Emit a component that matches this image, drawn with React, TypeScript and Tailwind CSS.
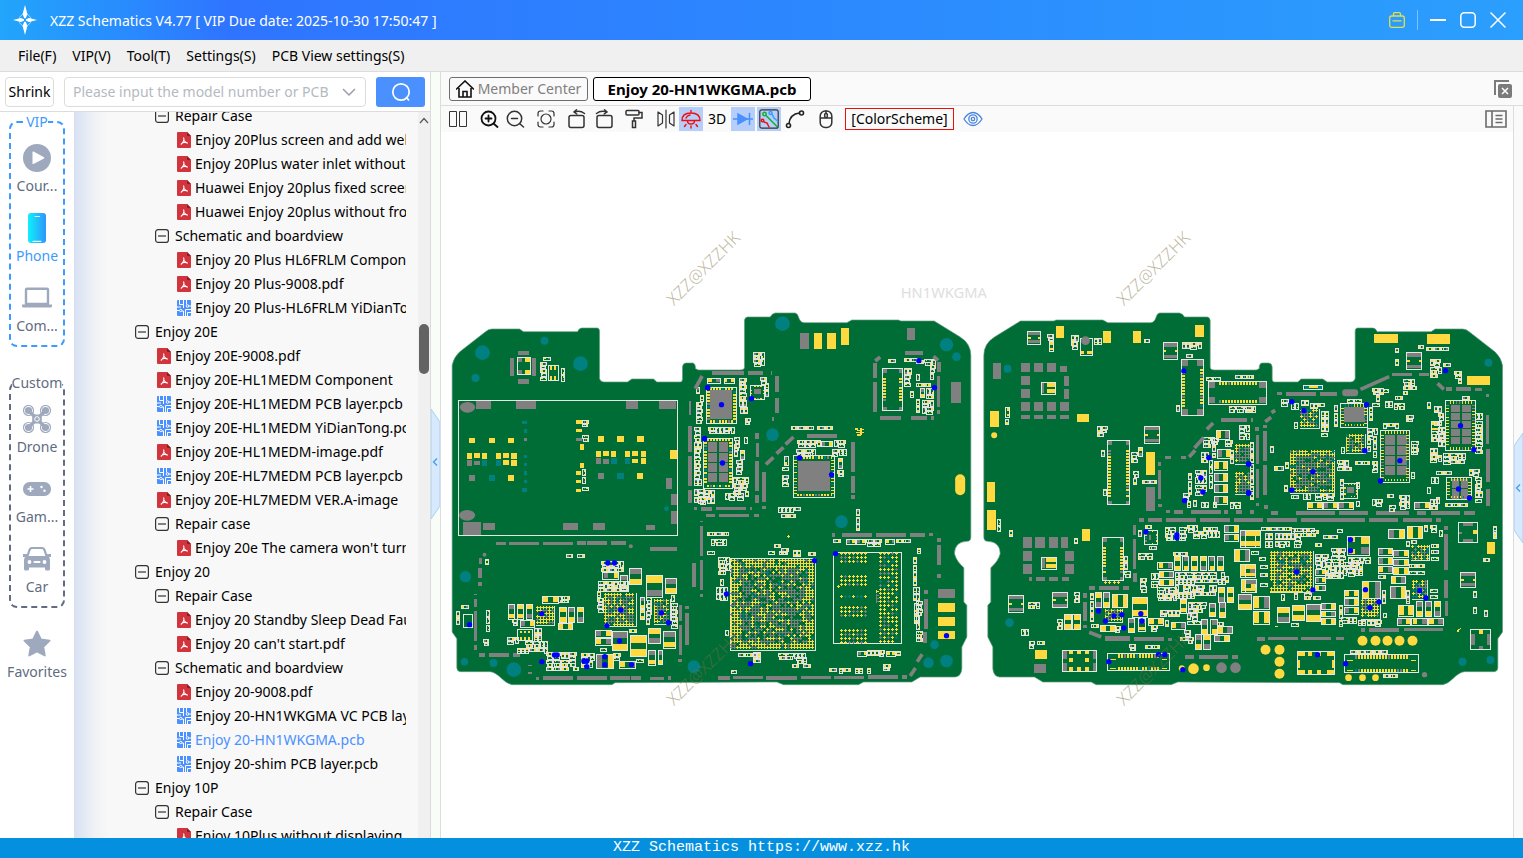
import React from 'react';

type Box = number[];

const HASH_SEED = 7919;

// Small seeded generator so that the board always comes out the same
const makeRandom = (seed: number) => {
  let s = seed * 2654435761 + HASH_SEED;
  return () => {
    s = (Math.imul(s ^ (s >>> 15), 2246822519) + 3266489917) | 0;
    return ((s ^ (s >>> 13)) >>> 0) / 4294967296;
  };
};

const parse = (data: string): Box[] =>
  data.split(';').map((part) => part.trim()).filter(Boolean).map((part) => part.split(/\s+/).map(Number));

const rect = (x: number, y: number, w: number, h: number) => `M${x} ${y}h${w}v${h}h${-w}z`;

interface Layers {
  yellow: string;
  gray: string;
  teal: string;
  hole: string;
  thin: string;
  thick: string;
}

// A two-terminal part: outline with a pad on each end
const addCap = (out: Layers, rnd: () => number, x: number, y: number, w: number, h: number, big = false) => {
  out[big ? 'thick' : 'thin'] += rect(x, y, w, h);
  const wide = w >= h;
  const pad = Math.round((wide ? w : h) * (big ? 0.34 : 0.36));
  const i = 2;
  const first = rnd() > 0.36 ? 'yellow' : 'gray';
  const second = first === 'gray' || rnd() > 0.45 ? 'yellow' : 'gray';
  if (wide) {
    out[first] += rect(x + i, y + i, pad - 2, h - i * 2);
    out[second] += rect(x + w - pad, y + i, pad - 2, h - i * 2);
  } else {
    out[first] += rect(x + i, y + i, w - i * 2, pad - 2);
    out[second] += rect(x + i, y + h - pad, w - i * 2, pad - 2);
  }
};

// Fills a region with small parts
const addCluster = (out: Layers, rnd: () => number, [x, y, w, h]: Box) => {
  if (w < 16 && h < 16) {
    addCap(out, rnd, x, y, w, h);
    return;
  }
  let py = y;
  while (py < y + h - 6) {
    const bh = Math.min(20, y + h - py);
    let px = x;
    while (px < x + w - 6) {
      const left = x + w - px;
      const roll = rnd();
      if (roll < 0.07) {
        px += 12;
      } else if (bh >= 15 && (roll < 0.5 || left < 16)) {
        addCap(out, rnd, px, py, 9, bh - 2);
        px += 12;
      } else if (left >= 15) {
        const cw = Math.min(20, left);
        addCap(out, rnd, px, py, cw, 9);
        if (bh > 17) addCap(out, rnd, px + (roll > 0.8 ? 3 : 0), py + 11, cw - 3, 8);
        px += cw + 3;
      } else {
        px += 10;
      }
    }
    py += bh < 18 ? bh + 2 : 22;
  }
};

// Ball grid array: x y w h pitch grayShare tealShare
const addGrid = (out: Record<'yellow' | 'gray' | 'teal', string>, rnd: () => number, b: Box) => {
  const [x, y, w, h, pitch, grayShare, tealShare] = b;
  for (let r = y + 4; r < y + h - 2; r += pitch) {
    for (let c = x + 4; c < x + w - 2; c += pitch) {
      const dx = Math.abs((c - x) / w - 0.5);
      const dy = Math.abs((r - y) / h - 0.5);
      const central = Math.max(dx, dy) < 0.4;
      const inner = central ? 1.5 : 0.4;
      const roll = rnd();
      if (central && w > 120 && rnd() > 0.86) continue;
      if (roll > 0.97) continue;
      const key = roll < tealShare ? 'teal' : roll < tealShare + grayShare * inner ? 'gray' : 'yellow';
      out[key] += `M${c - 4} ${r}h9M${c} ${r - 4}v9`;
    }
  }
};

// Quad package: x y w h, then centre x y w h, then centre columns and rows
const addQuad = (out: Layers, rnd: () => number, b: Box) => {
  const [x, y, w, h, cx, cy, cw, ch, cols, rows] = b;
  out.thick += rect(x, y, w, h);
  const len = w > 60 ? 11 : 6;
  const pick = () => (rnd() > 0.2 ? 'yellow' : rnd() > 0.5 ? 'gray' : 'teal');
  for (let px = x + 12; px < x + w - 12; px += 9) {
    out[pick()] += rect(px, y + 2, 5, len - 3);
    out[pick()] += rect(px, y + h - len + 1, 5, len - 3);
  }
  for (let py = y + 12; py < y + h - 12; py += 9) {
    out[pick()] += rect(x + 2, py, len - 2, 5);
    out[pick()] += rect(x + w - len, py, len - 2, 5);
  }
  const sw = (cw + 6) / cols;
  const sh = (ch + 3) / rows;
  for (let i = 0; i < cols; i++) {
    for (let j = 0; j < rows; j++) {
      out.gray += rect(Math.round(cx + i * sw), Math.round(cy + j * sh), Math.round(sw - 6), Math.round(sh - 3));
    }
  }
};

// Connector with pads along the two long sides
const addConnector = (out: Layers, rnd: () => number, [x, y, w, h]: Box) => {
  out.thick += rect(x, y, w, h);
  const pick = () => (rnd() > 0.18 ? 'yellow' : rnd() > 0.3 ? 'gray' : 'teal');
  if (w > h) {
    for (let px = x + 32; px < x + w - 30; px += 9) {
      out[pick()] += rect(px, y + 2, 4, 10);
      out[pick()] += rect(px, y + h - 12, 4, 10);
    }
    if (h > 60) {
      out.gray += rect(x + 2, y + 2, 18, 18) + rect(x + 2, y + h - 20, 18, 18) + rect(x + w - 22, y + 2, 20, 18) + rect(x + w - 22, y + h - 20, 20, 18);
    } else {
      out.yellow += rect(x + 8, y + 15, 16, 3) + rect(x + 8, y + h - 8, 16, 3) + rect(x + w - 24, y + 15, 16, 3) + rect(x + w - 24, y + h - 8, 16, 3);
    }
  } else {
    const corner = h > 150 && h < 180 ? 18 : 10;
    for (let py = y + 28; py < y + h - 28; py += 9) {
      out[pick()] += rect(x + 2, py, 9, 5);
      out[pick()] += rect(x + w - 12, py, 10, 5);
    }
    out.gray += rect(x + 2, y + 2, corner, corner) + rect(x + w - corner - 2, y + 2, corner, corner) + rect(x + 2, y + h - corner - 2, corner, corner) + rect(x + w - corner - 2, y + h - corner - 2, corner, corner);
  }
};

interface SectorData {
  offset: number;
  seed: number;
  gray: string;
  yellow: string;
  teal: string;
  grayDots: string;
  yellowDots: string;
  tealDots: string;
  blueDots: string;
  bars: string;
  boxes: string;
  caps: string;
  clusters: string;
  grids: string;
  quads: string;
  connectors: string;
  inductors: string;
}

const sectors: SectorData[] = [
  {
    offset: 0,
    seed: 3,
    gray: '234 153 33 12;210 174 12 54;276 174 12 54;234 237 33 14;232 174 14 10;232 210 14 12;108 303 45 24;228 303 60 24;558 303 36 24;657 303 51 24;69 666 54 39;129 669 36 21;369 669 45 21;459 669 36 21;618 675 27 15;693 633 18 39;693 582 18 33;678 534 18 33;747 303 6 42;744 378 12 78;744 468 12 90;744 570 12 39;778 663 10 3;778 678 11 90;778 780 11 90;756 789 12 72;778 882 11 9;762 621 9 9;783 621 30 12;168 726 30 9;207 726 90 9;309 726 90 9;411 723 27 12;441 723 60 12;513 723 45 12;630 741 81 12;117 774 9 18;114 804 12 30;114 846 12 12;102 882 9 3;102 897 9 24;102 933 9 90;102 1035 9 15;117 1059 18 12;147 1059 60 12;219 1059 21 12;264 1095 12 3;264 1116 12 6;288 1131 9 9;309 1128 90 12;411 1128 90 12;510 1128 60 12;573 1128 30 12;630 1131 42 9;684 1128 9 12;717 915 9 48;717 975 9 90;714 1077 12 9;735 918 12 9;735 939 12 96;252 414 9 9;408 414 18 9;81 480 15 18;102 483 18 12;87 525 18 18;468 474 15 18;489 477 18 15;474 519 18 18',
    yellow: '255 174 15 10;255 210 15 12;87 414 18 15;147 414 18 15;204 414 18 15;81 459 15 18;102 459 18 15;126 459 15 18;168 459 15 18;189 459 18 15;213 459 18 18;189 480 18 15;213 480 18 18;204 525 18 18;408 360 18 12;408 387 18 9;420 432 12 18;420 489 12 15;408 513 15 12;408 540 15 9;408 567 15 9;474 408 18 18;531 408 21 18;591 408 21 18;468 453 15 18;489 453 18 15;513 453 15 18;555 453 15 18;576 453 18 15;603 453 15 18;576 477 18 12;603 474 15 18;591 519 18 18;690 450 21 27;239 991 5 8;251 991 5 8;263 991 5 8;239 1010 5 8;251 1010 5 8;263 1010 5 8;330 198 6 12;342 198 6 12;330 226 6 12;342 226 6 12',
    teal: '246 363 15 9;252 387 9 12;252 465 9 9;252 489 9 9;252 513 9 12;252 540 9 9;246 564 15 12;126 480 15 18;168 480 15 18;147 525 18 18;513 474 18 18;555 474 15 18;531 519 21 18',
    grayDots: '133 763 6;572 738 6',
    yellowDots: '',
    tealDots: '127 157 22;313 121 12;421 190 22;106 233 12;76 829 17;73 1084 11;160 1088 12;221 1108 22;679 625 7;761 1099 19',
    blueDots: '802 262;794 415;503 788;523 788;305 940;88 973;542 929;500 976;664 938;685 967;538 1022;343 1064;351 1064;305 1084;431 1082;440 1082;440 1099;494 1069;494 1093;574 1093',
    bars: '765 265 786 227',
    boxes: '55 301 658 405;232 171 40 52;324 195 32 46;232 987 46 34;70 942 26 38',
    caps: '204 912 20 44;231 912 20 44;258 912 20 44;358 921 20 45;384 921 20 45;411 921 20 45;306 888 48 20;240 960 42 20;354 968 44 20;568 805 37 48;618 825 50 65;676 834 34 46;488 816 48 20;541 825 20 44;465 990 48 20;465 1014 48 20;516 993 46 58;570 1005 50 64;625 984 36 46;670 993 36 50;625 1050 22 44;537 1084 48 19;468 1063 52 42;600 891 14 34;600 927 14 30;654 1051 14 42',
    clusters: '300 186 20 56;365 204 9 40;310 170 36 10;428 360 16 70;428 508 12 42;428 560 16 16;768 262 22 108;762 382 20 178;762 568 40 40;378 762 80 10;484 783 75 30;476 843 90 30;472 872 18 90;618 890 16 85;695 886 16 95;48 933 18 50;64 915 32 10;136 777 8 18;140 930 9 70;130 1017 16 20;216 957 16 20;202 1012 30 22;282 984 20 40;232 1022 95 38;318 1057 98 54;480 1043 32 14;424 1060 40 44;568 987 28 14;590 1076 32 14;356 888 34 28;520 1060 24 28',
    grids: '288 918 56 56 9 0.25 0;492 878 96 100 9 0.35 0.06;640 896 50 76 9 0.35 0.06',
    quads: '',
    connectors: '',
    inductors: '',
  },
  {
    offset: 780,
    seed: 11,
    gray: '300 99 27 48;621 84 24 36;615 153 54 12;519 189 12 45;519 246 12 90;540 348 63 12;633 348 48 12;693 348 9 12;711 186 12 30;711 228 9 62;711 291 9 30;711 330 9 12;753 246 30 63;36 213 96 12;144 213 45 12;213 213 3 12;225 228 12 48;225 294 12 45;216 351 6 12;165 399 12 18;168 429 9 42;165 483 12 90;165 585 12 24;186 516 12 90;186 618 12 9;321 402 90 12;453 426 12 90;453 528 12 51;453 585 12 12;3 621 33 12;48 621 90 9;150 621 6 9;18 642 27 9;57 642 90 9;162 642 15 9;396 699 9 12;426 699 90 12;528 699 90 12;630 699 45 12;687 699 12 9;711 714 12 12;711 735 12 60;711 822 12 12;714 867 51 27;672 870 12 12;672 897 12 90;669 996 12 33;54 1128 36 12;99 1128 90 9;198 1128 93 10;303 1128 90 9;402 1126 90 11;504 1125 90 12;606 1125 15 12',
    yellow: '342 99 24 48;381 99 27 48;423 84 24 51;714 909 51 27;714 951 51 27;714 993 51 24;262 708 8 2;265 705 2 8;464 384 8 4;470 388 14 4;466 394 24 4;470 400 8 8;480 382 4 22;484 386 7 4;474 404 8 4',
    teal: '',
    grayDots: '',
    yellowDots: '',
    tealDots: '247 70 22;739 133 20;769 169 13;217 403 19;424 664 19;703 1033 13;739 1082 19;685 1087 16',
    blueDots: '656 181;703 262;23 262;64 313;154 295;13 415;67 488;298 472;394 523;343 781;406 760;79 881;151 1090;739 1006',
    bars: '197 492 220 471;229 460 250 441;256 432 280 410;525 182 540 170;700 168 714 180;651 1084 666 1062;630 1127 646 1103',
    boxes: '90 775 256 276;400 757 204 273',
    caps: '120 450 14 28;660 264 14 28;252 468 12 28;414 474 14 30;364 424 34 15;22 234 40 14;72 234 30 14;438 718 28 13;468 718 28 13;556 718 28 13;642 908 12 30;642 940 12 30;472 1053 28 14;558 1053 28 14',
    clusters: '160 156 36 46;118 234 24 86;168 232 38 18;196 248 12 42;120 322 30 24;136 354 16 20;25 381 88 24;103 410 16 60;134 410 12 24;108 480 20 40;100 530 48 60;75 580 75 22;0 570 42 42;273 378 66 13;341 370 9 21;353 378 52 13;292 421 40 24;330 421 30 20;404 421 38 20;290 448 60 18;384 448 54 18;248 500 18 10;246 526 22 36;412 510 18 20;234 621 68 16;243 642 45 16;468 628 14 64;22 696 62 12;34 716 52 26;22 752 20 10;55 770 35 52;60 838 22 64;48 860 12 40;204 752 60 10;222 733 20 10;245 744 22 28;280 750 22 20;326 756 22 10;565 178 30 14;612 174 40 10;612 204 20 60;650 180 20 10;674 176 34 24;650 222 22 24;690 196 16 60;650 250 40 10;630 272 14 30;680 264 20 34;648 296 9 44;668 300 32 42;400 718 28 13;500 718 50 18;588 718 50 14;652 744 16 16;640 772 14 130;650 860 16 168;114 1060 78 10;160 1056 30 34;236 1058 84 18;276 1070 60 36;502 1050 52 18;588 1052 12 14;388 1104 20 16;418 1104 96 16;550 1092 20 20;94 1109 16 8;75 990 8 18',
    grids: '90 775 256 276 9 0.38 0.05;420 754 80 42 12 0.3 0;420 823 80 42 12 0.3 0;420 884 80 16 12 0.1 0.7;420 916 80 42 12 0.3 0;420 985 80 46 12 0.3 0;537 754 56 276 12 0.25 0.1;410 854 12 12 12 0 0;526 870 12 42 10 0.4 0',
    quads: '19 260 90 110 30 270 66 87 1 1;10 413 88 150 24 426 60 120 2 4;280 466 124 124 294 483 96 90 1 1;150 256 44 42 162 267 20 15 1 1',
    connectors: '547 205 60 126',
    inductors: '',
  },
  {
    offset: 1605,
    seed: 23,
    gray: '54 189 24 48;138 189 27 27;177 189 27 27;216 189 27 27;255 198 21 18;138 228 27 27;267 228 15 30;138 267 27 27;267 267 15 30;138 306 27 27;177 306 27 27;216 306 27 27;255 306 27 27;138 345 27 12;177 345 27 12;216 345 27 12;255 345 27 12;513 561 27 72;549 486 9 12;549 510 9 87;549 612 12 9;570 468 18 9;618 468 15 9;738 354 78 12;828 354 6 12;573 630 12 9;597 630 27 12;648 630 90 10;747 630 12 12;783 630 18 12;825 630 12 12;492 654 15 12;519 654 42 12;573 654 90 12;675 654 90 12;777 654 63 12;144 711 27 33;180 711 30 33;222 711 27 33;258 711 21 33;144 753 27 30;270 753 27 30;144 792 27 30;270 792 27 30;162 831 9 12;183 831 27 12;222 831 27 12;261 831 21 12;474 675 9 30;474 717 9 90;474 819 12 27;342 858 18 12;372 858 60 12;444 858 18 12;324 879 12 15;324 906 12 57;324 975 12 9;390 1008 75 15;477 1011 90 12;579 1014 12 9;177 1092 36 27;630 1065 27 12;672 1065 87 12;771 1065 18 12;199 248 6 31;199 773 9 31;263 1053 12 24;263 1088 12 24;353 1053 12 24;353 1088 12 24',
    yellow: '243 78 24 36;384 93 24 36;474 93 24 36;660 75 27 36;45 333 27 48;306 342 36 24;513 456 27 69;36 546 24 60;36 630 27 60;321 687 24 36;180 1050 36 27;216 248 25 13;216 266 25 13;213 773 32 12;213 790 32 12;318 152 9 9;336 152 14 9;282 1050 12 12;306 1050 12 12;330 1050 12 12;282 1074 12 12;330 1074 12 12;282 1101 12 12;306 1101 12 12;330 1101 12 12;386 846 10 2;390 842 2 10;398 846 10 2;402 842 2 10;412 846 10 2;416 842 2 10;425 846 10 2;429 842 2 10',
    teal: '',
    grayDots: '331 121 13;739 1102 16;781 1102 16',
    yellowDots: '655 1105 16;694 1102 10;620 1104 9;57 405 9',
    tealDots: '97 205 12;103 967 13',
    blueDots: '626 212;701 472;820 491;677 533;683 575;820 578;628 601;512 695;605 704;605 712;370 932;416 947;440 943;391 962;446 983;497 940;500 962;550 1063;569 1063;401 1084;623 1108',
    bars: '642 470 660 450;658 443 686 411;695 387 714 368;342 996 378 1010',
    boxes: '198 246 44 35;198 771 47 35;316 115 37 51;262 1051 103 63',
    caps: '724 390 40 26;726 447 41 26;718 483 40 26;718 519 40 24;718 552 40 24;718 587 40 24;747 676 44 21;747 702 44 20;795 690 45 50;778 748 46 36;795 793 45 37;798 838 42 37;790 882 40 46;361 877 18 44;385 877 18 44;412 883 46 38;472 892 46 58;376 976 44 18;459 955 20 42;490 955 20 37;267 942 22 46;293 942 22 46;548 786 44 20;552 813 44 19;552 837 44 19;598 768 18 43;623 768 18 43;648 768 18 43;675 768 18 43;701 768 18 43;727 768 18 43;730 861 18 46;756 861 18 46;615 898 20 40;702 909 20 40;732 906 20 46;678 958 20 44;707 958 20 44;726 978 46 22;718 1004 44 20;660 1002 20 46;685 1002 20 46;588 966 44 20;520 954 44 20;222 124 13 28;489 441 13 28;92 322 12 28',
    clusters: '216 102 22 20;288 105 20 58;357 113 22 28;507 117 16 8;622 127 62 20;634 162 18 8;604 315 9 30;90 356 18 18;693 230 60 9;780 226 60 10;762 317 78 24;366 378 30 36;378 450 14 24;468 455 20 36;474 512 16 46;502 540 42 9;384 566 9 32;68 656 9 40;102 690 9 20;686 410 32 30;712 414 18 60;765 450 9 50;826 425 10 175;752 420 24 22;792 376 40 44;678 455 22 34;662 510 34 74;640 520 12 80;624 580 26 42;655 600 9 26;704 480 9 120;765 605 30 22;680 605 50 18;297 693 18 38;490 690 12 20;524 738 24 10;510 676 22 12;570 680 40 50;614 680 20 40;636 676 34 20;655 694 80 24;684 682 60 9;490 758 50 22;540 750 11 28;448 768 18 68;495 835 26 48;530 820 20 40;594 756 60 9;600 815 152 38;548 860 60 50;600 855 60 40;655 855 72 30;640 905 60 30;556 930 60 28;570 960 14 30;636 940 40 30;615 990 40 30;640 1010 16 26;528 975 40 22;346 880 9 94;160 905 30 20;297 875 16 36;300 912 14 28;246 956 16 32;140 988 20 24;162 1024 16 20;188 1024 34 12;462 1032 28 20;498 1036 62 13;350 972 24 10;420 978 16 26;728 966 18 8;750 828 12 30',
    grids: '388 927 54 38 9 0.3 0;780 432 46 60 9 0.6 0.03;780 515 46 66 9 0.6 0.03',
    quads: '508 690 40 43 522 704 6 14 1 1',
    connectors: '619 178 67 168;700 243 174 68;397 421 67 192;382 712 64 129;397 1060 187 51',
    inductors: '157 93 40 38;564 127 44 49;508 378 46 50;100 885 46 50;232 877 46 45',
  },
  {
    offset: 2415,
    seed: 41,
    gray: '123 276 90 12;225 276 51 12;96 276 15 9;441 219 60 9;522 219 30 9;603 261 18 12;633 261 45 12;690 264 21 9;723 282 9 9;723 345 9 87;723 447 12 99;723 567 12 51;33 405 9 87;54 393 12 90;33 507 9 87;54 495 12 90;33 609 9 9;57 615 12 12;15 630 12 12;78 633 21 12;153 633 117 12;282 633 87 12;393 633 99 12;516 633 27 12;558 633 87 12;657 633 33 12;0 654 54 12;66 654 90 12;168 654 192 12;372 654 87 12;474 654 87 12;573 654 15 12;597 678 12 12;597 702 12 108;597 840 12 54;600 903 9 45;348 984 12 12;372 984 90 12;477 984 117 9;36 1011 24 12;69 1011 90 9;168 1011 90 9;273 1011 24 9;0 354 6 12;18 354 6 12;54 375 12 9;30 381 12 12;348 740 24 22;642 694 9 8;652 669 30 9;652 716 30 9;678 1000 10 34;724 1000 10 34;700 1036 12 10',
    yellow: '387 102 72 27;546 102 69 30;666 228 69 27;726 726 24 36;348 711 24 20;310 711 20 14;310 745 20 16;684 690 12 12;700 990 12 12;635 990 6 4;639 986 6 4;643 982 4 4;90 978 9 2;159 1056 20 10;188 1056 12 10;214 1056 14 10;244 1056 22 10;159 1110 20 10;188 1110 12 10;214 1110 14 10;244 1110 22 10;159 1078 6 24;261 1078 6 24;190 258 28 6',
    teal: '178 258 12 8;218 258 13 8',
    grayDots: '538 1123 8',
    yellowDots: '352 1021 15;391 1021 15;427 1021 15;463 1021 15;502 1021 15;61 1048 15;103 1048 15;103 1084 15;103 1120 15;310 1132 10;352 1132 10;391 1132 10',
    tealDots: '730 187 12;652 1084 12;736 1079 12',
    blueDots: '601 211;140 304;176 331;364 313;646 376;686 448;359 451;464 481;406 542;203 514;140 569;11 491;11 578;640 566;673 593;316 718;316 751;154 815;203 869;361 868;401 905;374 922;524 871;542 893;217 1063;301 1090',
    bars: '346 267 432 229;60 364 78 351;79 337 90 330;577 249 596 267',
    boxes: '175 256 58 12;307 709 67 55;157 1054 112 69;640 667 58 60;676 988 61 60',
    caps: '0 690 45 50;0 793 32 37;0 838 34 37;25 888 48 38;25 933 48 38;97 921 36 46;142 915 36 46;184 911 43 52;430 688 48 27;487 678 46 37;352 844 54 50;436 858 46 37;459 915 46 32;400 744 42 20;400 772 42 20;400 798 42 20;445 750 46 20;445 776 46 20;445 802 46 20;438 828 44 22;298 870 42 20;298 895 42 20;298 921 42 20;228 909 43 19;228 932 43 17;228 955 43 18;514 904 19 44;541 904 19 44;568 904 19 44;457 954 40 20;500 954 46 20;550 954 44 20;186 606 46 20;234 606 44 20;280 606 46 20;508 606 46 20;210 808 30 16;210 832 30 16;210 855 30 16;88 498 28 13;558 364 26 28',
    clusters: '5 225 30 14;5 318 26 24;450 143 9 14;520 136 16 8;544 141 70 14;450 178 16 26;556 178 30 52;595 190 30 12;628 214 28 38;110 298 26 26;140 308 20 20;168 300 26 18;195 310 44 16;148 365 12 30;228 332 20 74;267 316 14 74;306 296 60 8;372 320 14 56;382 264 30 56;414 266 16 12;420 302 26 28;452 288 24 10;448 308 30 20;475 236 40 30;484 345 26 28;474 274 14 8;522 286 26 14;546 306 9 26;568 318 28 60;558 392 40 30;580 380 20 60;652 288 30 9;692 340 24 120;415 370 50 16;366 385 34 30;366 415 14 40;384 408 14 78;278 480 40 34;290 440 9 30;330 484 70 12;382 484 16 30;500 422 26 40;556 444 30 40;596 460 20 36;616 458 46 34;575 514 60 8;672 508 40 20;560 530 30 28;548 560 14 24;574 570 18 46;690 530 20 80;498 515 12 34;600 610 66 12;285 538 9 62;335 545 10 50;140 586 24 12;176 580 96 18;335 604 14 16;383 598 30 24;426 582 30 9;462 585 32 40;432 614 26 18;556 596 20 30;120 465 12 44;118 555 14 22;76 438 12 30;50 682 90 14;60 700 20 44;90 700 80 40;140 684 70 16;170 700 40 12;210 730 24 12;200 690 34 14;210 762 40 46;240 776 60 60;260 745 40 30;296 786 60 40;310 770 70 24;240 826 50 14;235 706 46 12;276 686 16 8;20 752 20 14;42 770 30 14;46 794 26 12;46 820 26 12;46 848 26 12;110 882 10 26;148 878 12 26;166 878 38 26;205 888 20 14;140 968 26 14;282 915 10 66;290 950 50 26;340 960 26 16;366 960 46 18;412 870 9 50;416 938 14 16;484 870 8 40;494 792 60 14;494 812 60 14;560 732 32 14;560 750 32 12;560 770 28 14;556 866 30 14;556 884 30 14;555 676 26 28;538 676 9 24;584 690 9 40;484 724 9 16;498 720 16 12;400 826 26 10;732 690 26 20;745 678 12 38;714 774 48 10;684 873 18 28;684 920 18 20;706 930 20 20;316 1050 126 8;414 1122 52 8',
    grids: '165 325 58 60 9 0.3 0.15;133 448 136 130 9 0.5 0.04;301 400 60 60 9 0.35 0.12;75 751 130 124 9 0.28 0.06;498 735 54 46 9 0.35 0.1;500 840 48 56 9 0.3 0.2;348 896 58 60 9 0.3 0.05',
    quads: '286 310 82 70 297 321 63 45 1 1;406 391 88 154 420 405 63 120 2 4;601 301 90 150 618 315 60 117 2 5;604 532 76 64 621 535 45 60 2 2;295 549 43 44 306 561 20 18 1 1',
    connectors: '298 1063 223 54',
    inductors: '484 157 46 49;646 816 46 44',
  },
];

const outline =
  'M36 195Q40 172 58 155L135 95Q145 86 155 86L238 86L250 94L412 94Q416 84 425 83L472 83Q478 84 478 92L478 235Q482 245 492 245L562 245L575 236L640 236L650 245L720 245Q727 245 727 235L727 200Q728 188 738 188L758 188Q766 190 766 205L775 209L900 209Q913 209 913 200L913 60Q914 51 922 50L990 50Q995 40 1005 38L1065 38Q1073 40 1075 50Q1080 67 1092 67L1220 67L1235 59L1375 59L1382 62L1482 62L1560 110Q1592 130 1592 165L1592 710Q1592 723 1580 723Q1543 725 1543 760Q1548 782 1571 802L1571 905L1580 915L1580 1010L1565 1040L1565 1105Q1563 1128 1545 1130L1440 1130L1415 1145L1270 1145L1255 1153L1030 1153L1010 1145L525 1147L515 1153L215 1153Q200 1150 185 1135Q165 1115 150 1114L60 1114Q50 1112 50 1102L50 1015L36 995Z';

const buildSector = (s: SectorData) => {
  const rnd = makeRandom(s.seed);
  const out: Layers = { yellow: '', gray: '', teal: '', hole: '', thin: '', thick: '' };
  const balls = { yellow: '', gray: '', teal: '' };
  parse(s.gray).forEach(([x, y, w, h]) => (out.gray += rect(x, y, w, h)));
  parse(s.yellow).forEach(([x, y, w, h]) => (out.yellow += rect(x, y, w, h)));
  parse(s.teal).forEach(([x, y, w, h]) => (out.teal += rect(x, y, w, h)));
  parse(s.boxes).forEach(([x, y, w, h]) => (out.thick += rect(x, y, w, h)));
  parse(s.caps).forEach(([x, y, w, h]) => addCap(out, rnd, x, y, w, h, true));
  parse(s.clusters).forEach((b) => addCluster(out, rnd, b));
  parse(s.grids).forEach((b) => {
    addGrid(balls, rnd, b);
    if (b[4] === 9) out.hole += `M${b[0] + b[2]} ${b[1]}v${b[3]}h${-b[2]}`;
  });
  parse(s.quads).forEach((b) => addQuad(out, rnd, b));
  parse(s.connectors).forEach((b) => addConnector(out, rnd, b));
  parse(s.inductors).forEach(([x, y, w, h]) => {
    out.thick += rect(x, y, w, h);
    out.gray += rect(x + 2, y + 2, w - 4, 10) + rect(x + 2, y + h - 12, w - 4, 10);
    out.yellow += rect(x + 2, y + h / 2 - 3, 7, 6) + rect(x + w - 9, y + h / 2 - 3, 7, 6);
  });
  return { ...s, out, balls };
};

const built = sectors.map(buildSector);

const dots = (data: string, fill: string, fixed?: number) =>
  parse(data).map(([x, y, r], i) => <circle key={`${fill}${i}`} cx={x} cy={y} r={fixed ?? r} fill={fill} />);

const Sector: React.FC<{ data: (typeof built)[number] }> = ({ data }) => (
  <g transform={`translate(${data.offset} 0)`}>
    {dots(data.tealDots, '#008080')}
    <g shapeRendering="crispEdges">
      <path d={data.out.gray} fill="#808080" />
      <path d={data.out.teal} fill="#008080" />
      <path d={data.out.yellow} fill="#ffd940" />
      <path d={data.out.thin} fill="none" stroke="#e1e4df" strokeWidth="3" />
      <path d={data.out.thick} fill="none" stroke="#e4e8e2" strokeWidth="3" />
      <path d={data.out.hole} fill="none" stroke="#d9e3da" strokeWidth="3" />
      <path d={data.balls.gray} fill="none" stroke="#808080" strokeWidth="3" />
      <path d={data.balls.teal} fill="none" stroke="#008080" strokeWidth="3" />
      <path d={data.balls.yellow} fill="none" stroke="#ffd940" strokeWidth="3" />
    </g>
    {parse(data.bars).map(([x1, y1, x2, y2], i) => (
      <line key={i} x1={x1} y1={y1} x2={x2} y2={y2} stroke="#808080" strokeWidth="11" />
    ))}
    {dots(data.grayDots, '#808080')}
    {dots(data.yellowDots, '#ffd940')}
    {dots(data.blueDots, '#0000ff', 8)}
  </g>
);

const Watermark: React.FC<{ x: number; y: number }> = ({ x, y }) => (
  <text
    transform={`translate(${x} ${y}) rotate(-45)`}
    textAnchor="middle"
    dominantBaseline="central"
    fontSize="51"
    fontWeight="300"
    fill="#80723f"
    fillOpacity="0.5"
  >
    XZZ@XZZHK
  </text>
);

const Board: React.FC = () => (
  <svg viewBox="4 -505 3213 2118" className="block h-full w-full" role="img" aria-label="HN1WKGMA board view">
    <path d={outline} fill="#006c36" stroke="#5d9c7c" strokeWidth="2" />
    <path d={outline} fill="#006c36" stroke="#5d9c7c" strokeWidth="2" transform="translate(3223 0) scale(-1 1)" />
    {built.map((s) => (
      <Sector key={s.offset} data={s} />
    ))}
    <ellipse cx="82" cy="321" rx="23" ry="16" fill="#808080" />
    <ellipse cx="81" cy="645" rx="24" ry="16" fill="#808080" />
    <rect x="1545" y="522" width="30" height="63" rx="15" fill="#ffd940" />
    <rect x="2706" y="267" width="48" height="21" rx="10" fill="#808080" />
    <text x="1511" y="-7" textAnchor="middle" fontSize="44" fill="#dedede">HN1WKGMA</text>
    <Watermark x={789} y={-97} />
    <Watermark x={2139} y={-97} />
    <Watermark x={789} y={1103} />
    <Watermark x={2139} y={1103} />
  </svg>
);

/* ---------- Icons ---------- */

const LogoIcon = () => (
  <svg viewBox="0 0 26 30" className="h-[30px] w-[26px]" aria-hidden="true">
    <circle cx="13" cy="15" r="6" fill="none" stroke="#9fdcff" strokeWidth="1" />
    <path d="M13 0l2.400 9-1.600 4.200h-1.600L10.600 9zM13 30l-2.400-9 1.600-4.200h1.600L15.400 21zM1 15l8-2 3 1.200v1.600L9 17zM25 15l-8-2-3 1.200v1.600L17 17z" fill="#fff" />
  </svg>
);

const PdfIcon = () => (
  <svg viewBox="0 0 14 16" className="ml-[2px] h-4 w-[14px] shrink-0" aria-hidden="true">
    <path d="M1 0h9l4 4v11a1 1 0 0 1-1 1H1a1 1 0 0 1-1-1V1a1 1 0 0 1 1-1z" fill="#d2343d" />
    <path d="M10 0l4 4h-3a1 1 0 0 1-1-1z" fill="#8e1a22" />
    <path d="M6.500 5.500c1 2 .2 4.500-2.700 7M7.200 8.500c.6 1.400 1.800 2.300 3.600 2.600M5.500 10.800c1.600-.6 3.200-.7 5 .3" fill="none" stroke="#fff" strokeWidth="1.100" />
  </svg>
);

const PcbIcon = () => (
  <svg viewBox="0 0 14 16" className="ml-[2px] h-4 w-[14px] shrink-0" aria-hidden="true">
    <rect width="14" height="16" rx="1" fill="#4a90ff" />
    <g fill="none" stroke="#fff" strokeWidth="1">
      <path d="M2.500 0v4.500h4M6.500 0v8M0 7h4M9.500 0v4.500M12 6h2M0 10.500h2.500M8.500 16V9.500H14M5 11h1.500v5M10.500 16v-3.500h3.500" />
      <circle cx="3.800" cy="10.500" r="1.200" />
      <circle cx="10.500" cy="6" r="1.300" />
    </g>
  </svg>
);

const CollapseIcon = () => (
  <svg viewBox="0 0 14 14" className="mr-[2px] h-[14px] w-[14px] shrink-0" fill="none" stroke="#333" strokeWidth="1.200" aria-hidden="true">
    <rect x=".6" y=".6" width="12.800" height="12.800" rx="2.500" />
    <path d="M3 7h8" />
  </svg>
);

const CourseIcon = () => (
  <svg viewBox="0 0 28 28" className="h-7 w-7" aria-hidden="true">
    <circle cx="14" cy="14" r="14" fill="#9fa9be" />
    <path d="M9.500 8.200q0-1 1-.6l10.500 5.600q.8.600 0 1.200l-10.500 5.600q-1 .4-1-.6z" fill="#fff" />
  </svg>
);

const PhoneIcon = () => (
  <svg viewBox="0 0 18 30" className="h-[30px] w-[18px]" aria-hidden="true">
    <defs>
      <linearGradient id="phoneFill" x1="0" x2="1" y1="0" y2="0">
        <stop offset="0" stopColor="#0ff0fb" />
        <stop offset="1" stopColor="#2f95fb" />
      </linearGradient>
    </defs>
    <rect width="18" height="30" rx="3" fill="url(#phoneFill)" />
    <path d="M7 3.500h4.500M5 28.300h8" stroke="#d8f6ff" strokeWidth="1.200" strokeLinecap="round" />
  </svg>
);

const ComputerIcon = () => (
  <svg viewBox="0 0 30 22" className="h-[22px] w-[30px]" aria-hidden="true">
    <path d="M5 1.800h20a1 1 0 0 1 1 1V17H4V2.800a1 1 0 0 1 1-1z" fill="none" stroke="#9fa9be" strokeWidth="2.400" />
    <path d="M0 17.500h30v1.500a1.500 1.500 0 0 1-1.500 1.500h-27A1.500 1.500 0 0 1 0 19z" fill="#9fa9be" />
  </svg>
);

const DroneIcon = () => (
  <svg viewBox="0 0 28 28" className="h-7 w-7" aria-hidden="true">
    <path d="M6 6l5 5v6l-5 5M22 6l-5 5v6l5 5" fill="none" stroke="#9fa9be" strokeWidth="3.200" />
    <rect x="9.500" y="9.500" width="9" height="9" rx="2" fill="#9fa9be" />
    {[[5.500, 5.500], [22.500, 5.500], [5.500, 22.500], [22.500, 22.500]].map(([x, y]) => (
      <g key={`${x}-${y}`} fill="#9fa9be">
        <circle cx={x} cy={y} r="5" fill="none" stroke="#9fa9be" strokeWidth="1.200" />
        <circle cx={x} cy={y} r="3.600" />
      </g>
    ))}
    <circle cx="14" cy="14" r="2.300" fill="#9fa9be" stroke="#fff" strokeWidth="1" />
  </svg>
);

const GameIcon = () => (
  <svg viewBox="0 0 28 14" className="h-[14px] w-7" aria-hidden="true">
    <rect width="28" height="14" rx="6.500" fill="#9fa9be" />
    <path d="M4.500 7h6M7.500 4v6" stroke="#fff" strokeWidth="1.600" />
    <circle cx="18.500" cy="5" r="1.200" fill="#fff" />
    <circle cx="21.500" cy="8.700" r="1.200" fill="#fff" />
  </svg>
);

const CarIcon = () => (
  <svg viewBox="0 0 28 24" className="h-6 w-7" aria-hidden="true">
    <path d="M4.500 9L6.500 3Q7.300 1 9.500 1h9q2.200 0 3 2l2 6" fill="none" stroke="#9fa9be" strokeWidth="2.200" />
    <path d="M0 7h4v3H0zM24 7h4v3h-4zM3 9h22q2 1.500 2 4v9a1.500 1.500 0 0 1-1.500 1.500h-2A1.500 1.500 0 0 1 22 22v-1.500H6V22a1.500 1.500 0 0 1-1.500 1.500h-2A1.500 1.500 0 0 1 1 22v-9q0-2.500 2-4z" fill="#9fa9be" />
    <circle cx="6.500" cy="15" r="1.900" fill="#fff" />
    <circle cx="21.500" cy="15" r="1.900" fill="#fff" />
    <rect x="10.500" y="14" width="7" height="2" rx="1" fill="#fff" />
  </svg>
);

const StarIcon = () => (
  <svg viewBox="0 0 28 28" className="h-7 w-7" aria-hidden="true">
    <path d="M14 1.500l3.900 8 8.700 1.200-6.300 6.100 1.500 8.700L14 21.400l-7.800 4.100 1.500-8.700-6.300-6.100 8.700-1.200z" fill="#9fa9be" stroke="#9fa9be" strokeWidth="1.800" strokeLinejoin="round" />
  </svg>
);

const ToolIcon: React.FC<{ children: React.ReactNode; stroke?: string; width?: number }> = ({ children, stroke = '#333', width = 1.5 }) => (
  <svg viewBox="0 0 20 20" className="h-5 w-5" fill="none" stroke={stroke} strokeWidth={width} strokeLinecap="round" aria-hidden="true">
    {children}
  </svg>
);

/* ---------- Data ---------- */

type NodeKind = 'folder' | 'pdf' | 'pcb';

interface TreeNode {
  level: number;
  kind: NodeKind;
  label: string;
  active?: boolean;
}

const tree: TreeNode[] = [
  { level: 1, kind: 'folder', label: 'Repair Case' },
  { level: 2, kind: 'pdf', label: 'Enjoy 20Plus screen and add welding' },
  { level: 2, kind: 'pdf', label: 'Enjoy 20Plus water inlet without' },
  { level: 2, kind: 'pdf', label: 'Huawei Enjoy 20plus fixed screen' },
  { level: 2, kind: 'pdf', label: 'Huawei Enjoy 20plus without front' },
  { level: 1, kind: 'folder', label: 'Schematic and boardview' },
  { level: 2, kind: 'pdf', label: 'Enjoy 20 Plus HL6FRLM Component' },
  { level: 2, kind: 'pdf', label: 'Enjoy 20 Plus-9008.pdf' },
  { level: 2, kind: 'pcb', label: 'Enjoy 20 Plus-HL6FRLM YiDianTong' },
  { level: 0, kind: 'folder', label: 'Enjoy 20E' },
  { level: 1, kind: 'pdf', label: 'Enjoy 20E-9008.pdf' },
  { level: 1, kind: 'pdf', label: 'Enjoy 20E-HL1MEDM Component' },
  { level: 1, kind: 'pcb', label: 'Enjoy 20E-HL1MEDM PCB layer.pcb' },
  { level: 1, kind: 'pcb', label: 'Enjoy 20E-HL1MEDM YiDianTong.pcb' },
  { level: 1, kind: 'pdf', label: 'Enjoy 20E-HL1MEDM-image.pdf' },
  { level: 1, kind: 'pcb', label: 'Enjoy 20E-HL7MEDM PCB layer.pcb' },
  { level: 1, kind: 'pdf', label: 'Enjoy 20E-HL7MEDM VER.A-image' },
  { level: 1, kind: 'folder', label: 'Repair case' },
  { level: 2, kind: 'pdf', label: "Enjoy 20e The camera won't turn" },
  { level: 0, kind: 'folder', label: 'Enjoy 20' },
  { level: 1, kind: 'folder', label: 'Repair Case' },
  { level: 2, kind: 'pdf', label: 'Enjoy 20 Standby Sleep Dead Fault' },
  { level: 2, kind: 'pdf', label: "Enjoy 20 can't start.pdf" },
  { level: 1, kind: 'folder', label: 'Schematic and boardview' },
  { level: 2, kind: 'pdf', label: 'Enjoy 20-9008.pdf' },
  { level: 2, kind: 'pcb', label: 'Enjoy 20-HN1WKGMA VC PCB layer' },
  { level: 2, kind: 'pcb', label: 'Enjoy 20-HN1WKGMA.pcb', active: true },
  { level: 2, kind: 'pcb', label: 'Enjoy 20-shim PCB layer.pcb' },
  { level: 0, kind: 'folder', label: 'Enjoy 10P' },
  { level: 1, kind: 'folder', label: 'Repair Case' },
  { level: 2, kind: 'pdf', label: 'Enjoy 10Plus without displaying' },
];

const indent = ['pl-[61px]', 'pl-[81px]', 'pl-[101px]'];

const kindIcon: Record<NodeKind, React.ReactNode> = {
  folder: <CollapseIcon />,
  pdf: <PdfIcon />,
  pcb: <PcbIcon />,
};

const menus = ['File(F)', 'VIP(V)', 'Tool(T)', 'Settings(S)', 'PCB View settings(S)'];

/* ---------- Parts ---------- */

const TitleBar: React.FC = () => (
  <header className="flex h-10 shrink-0 items-center bg-linear-to-r from-[#22a5fb] via-[#2f74ff] via-15% to-[#2b9ffd] pr-[17px] pl-3 text-white">
    <LogoIcon />
    <h1 className="ml-3 flex-1 text-[14px] whitespace-nowrap">XZZ Schematics V4.77 [ VIP Due date: 2025-10-30 17:50:47 ]</h1>
    <button aria-label="Toolbox" className="mr-3">
      <svg viewBox="0 0 16 16" className="h-4 w-4" fill="none" stroke="#e2e04a" strokeWidth="1.300">
        <rect x=".7" y="4" width="14.600" height="11.300" rx="2" />
        <path d="M4.500 4V2q0-1.300 1.300-1.300h4.400q1.300 0 1.300 1.300v2M3.500 8.800h9" />
      </svg>
    </button>
    <span className="mr-3 h-5 w-px bg-white/40"></span>
    <button aria-label="Minimize" className="mr-[14px]">
      <svg viewBox="0 0 16 16" className="h-4 w-4" stroke="#fff" strokeWidth="2"><path d="M0 8h16" /></svg>
    </button>
    <button aria-label="Maximize" className="mr-[14px]">
      <svg viewBox="0 0 16 16" className="h-4 w-4" fill="none" stroke="#fff" strokeWidth="1.500"><rect x=".8" y=".8" width="14.400" height="14.400" rx="3.500" /></svg>
    </button>
    <button aria-label="Close">
      <svg viewBox="0 0 16 16" className="h-4 w-4" stroke="#fff" strokeWidth="1.500"><path d="M.5 .5l15 15M15.500 .5l-15 15" /></svg>
    </button>
  </header>
);

const NavItem: React.FC<{ label: string; active?: boolean; children: React.ReactNode }> = ({ label, active, children }) => (
  <button className="block w-full">
    <span className="flex h-8 items-center justify-center">{children}</span>
    <span className={`block text-center text-[14px] leading-6 ${active ? 'text-[#3d9bff]' : 'text-[#626b80]'}`}>{label}</span>
  </button>
);

const Sidebar: React.FC = () => (
  <nav className="w-[74px] shrink-0 bg-white">
    <fieldset className="mx-[9px] rounded-lg border-2 border-dashed border-[#3d9bff] pt-[10px] pb-[7px]">
      <legend className="mx-auto h-5 text-[14px] leading-5 text-[#3d9bff]">VIP</legend>
      <div className="space-y-[14px]">
        <NavItem label="Cour..."><CourseIcon /></NavItem>
        <NavItem label="Phone" active><PhoneIcon /></NavItem>
        <NavItem label="Com..."><ComputerIcon /></NavItem>
      </div>
    </fieldset>
    <fieldset className="mx-[9px] mt-[26px] rounded-lg border-2 border-dashed border-[#626b80] pt-[10px] pb-[7px]">
      <legend className="mx-auto h-5 text-[14px] leading-5 text-[#626b80]">Custom</legend>
      <div className="space-y-[14px]">
        <NavItem label="Drone"><DroneIcon /></NavItem>
        <NavItem label="Gam..."><GameIcon /></NavItem>
        <NavItem label="Car"><CarIcon /></NavItem>
      </div>
    </fieldset>
    <div className="mt-5">
      <NavItem label="Favorites"><StarIcon /></NavItem>
    </div>
  </nav>
);

const FileTree: React.FC = () => (
  <div className="flex min-w-0 flex-1 overflow-hidden bg-linear-to-r from-[#d7e1f2] via-[#f0f2f6] via-6% to-[#f8f8f8] to-10%">
    <ul className="-mt-2 min-w-0 flex-1 overflow-hidden pr-3">
      {tree.map((node, i) => (
        <li key={i} className={`flex h-6 items-center overflow-hidden ${indent[node.level]}`}>
          {kindIcon[node.kind]}
          <button className={`ml-1 flex-1 overflow-hidden text-left text-[14px] leading-6 whitespace-nowrap ${node.active ? 'text-[#4a90ff]' : 'text-black'}`}>
            {node.label}
          </button>
        </li>
      ))}
    </ul>
    <div className="flex w-3 shrink-0 flex-col items-center bg-[#f0f0f0]">
      <svg viewBox="0 0 12 16" className="h-4 w-3" fill="none" stroke="#555" strokeWidth="1.200"><path d="M2 11l4-4.500 4 4.500" /></svg>
      <span className="mt-[196px] h-[50px] w-[10px] rounded-full bg-[#636363]"></span>
    </div>
  </div>
);

const SidePanel: React.FC = () => (
  <aside className="flex w-[431px] shrink-0 flex-col overflow-hidden border-r border-[#dcdcdc]">
    <form className="flex h-10 shrink-0 items-center border-b border-[#dcdcdc] pr-[5px] pl-[5px]" onSubmit={(e) => e.preventDefault()}>
      <button type="button" className="h-[30px] w-[49px] rounded border border-[#dcdcdc] bg-white text-center text-[14px] text-black">Shrink</button>
      <div className="mx-[10px] flex h-[30px] min-w-0 flex-1 items-center rounded border border-[#dcdcdc] bg-white pr-[9px] pl-2">
        <input
          aria-label="Model number or PCB"
          placeholder="Please input the model number or PCB"
          className="min-w-0 flex-1 bg-transparent text-[14px] placeholder:text-[#b5b9c2] focus:outline-none"
        />
        <button type="button" aria-label="Show history" className="ml-[6px]">
          <svg viewBox="0 0 14 14" className="h-[14px] w-[14px]" fill="none" stroke="#9a9fa8" strokeWidth="1.500"><path d="M1 4l6 6 6-6" /></svg>
        </button>
      </div>
      <button type="submit" aria-label="Search" className="flex h-[30px] w-[49px] items-center justify-center rounded-[3px] bg-[#4a90ff]">
        <svg viewBox="0 0 20 20" className="h-5 w-5" fill="none" stroke="#fff" strokeWidth="1.700"><circle cx="10" cy="10" r="8.200" /><path d="M15 15l3 3.500" /></svg>
      </button>
    </form>
    <div className="flex min-h-0 flex-1">
      <Sidebar />
      <FileTree />
    </div>
  </aside>
);

const Divider = () => <span className="h-5 w-px bg-[#c9c9c9]"></span>;

const toolButton = 'flex h-6 w-6 items-center justify-center';

const Toolbar: React.FC = () => (
  <div className="flex h-[26px] shrink-0 items-center bg-[#fafafa] pr-[6px] pl-[5px] text-black">
    <button aria-label="Split view" className={toolButton}>
      <ToolIcon width={1}><path d="M1.500 2.500h7v15h-7zM11.500 2.500h7v15h-7z" strokeLinecap="butt" /></ToolIcon>
    </button>
    <span className="ml-1"><Divider /></span>
    <button aria-label="Zoom in" className={`${toolButton} ml-[3px]`}>
      <ToolIcon stroke="#111" width={1.8}><circle cx="9.500" cy="9.500" r="7" /><path d="M14.500 14.500l4 3.500M6.500 9.500h6M9.500 6.500v6" /></ToolIcon>
    </button>
    <button aria-label="Zoom out" className={`${toolButton} ml-[2px]`}>
      <ToolIcon><circle cx="9.500" cy="9.500" r="7.200" /><path d="M14.500 14.500l4 3.500M6.500 9.500h6" /></ToolIcon>
    </button>
    <span className="ml-1"><Divider /></span>
    <button aria-label="Fit" className={`${toolButton} ml-[3px]`}>
      <ToolIcon width={1.2}>
        <circle cx="10" cy="10" r="5" />
        <path d="M2 7V4.500Q2 2 4.500 2H7M13 2h2.500Q18 2 18 4.500V7M18 13v2.500q0 2.500-2.500 2.500H13M7 18H4.500Q2 18 2 15.500V13" />
      </ToolIcon>
    </button>
    <span className="ml-1"><Divider /></span>
    <button aria-label="Rotate left" className={`${toolButton} ml-[3px]`}>
      <ToolIcon><rect x="2" y="6.500" width="15" height="12" rx="2" /><path d="M17.500 4.500Q13 1 7.500 3M9.500 .8L7 3l2.800 2" /></ToolIcon>
    </button>
    <button aria-label="Rotate right" className={`${toolButton} ml-[3px]`}>
      <ToolIcon><rect x="3" y="6.500" width="15" height="12" rx="2" /><path d="M2.500 4.500Q7 1 12.500 3M10.500 .8L13 3l-2.800 2" /></ToolIcon>
    </button>
    <span className="ml-1"><Divider /></span>
    <button aria-label="Paint" className={`${toolButton} ml-[2px]`}>
      <ToolIcon><rect x="2" y="1.500" width="13" height="4.500" rx="1" /><path d="M15 3.500h3v5.500h-8v3M8.500 12h3v6.500h-3z" /></ToolIcon>
    </button>
    <span className="ml-[5px]"><Divider /></span>
    <button aria-label="Mirror" className={`${toolButton} ml-[3px]`}>
      <ToolIcon width={1.2}><path d="M10 1v18M2 3v14l4.500-3V6zM18 3v14l-4.500-3V6z" strokeLinejoin="round" /></ToolIcon>
    </button>
    <button aria-label="Lamp" className={`${toolButton} ml-px bg-[#b5cffa]`}>
      <ToolIcon stroke="#f20d0d" width={1.4}>
        <path d="M1 11.500Q1 4 10 4t9 7.500zM10 4V1.500M6.500 12q0 3 3.500 3t3.500-3M10 17v2M5 15.500l-1.500 2M15 15.500l1.500 2M5 9q1-2.500 4-3" />
      </ToolIcon>
    </button>
    <button className="ml-[5px] w-[18px] text-center text-[14px] leading-6">3D</button>
    <button aria-label="Diode mode" className={`${toolButton} ml-[5px] bg-[#b5cffa]`}>
      <ToolIcon stroke="#4a90ff"><path d="M0 10h20M16.500 4.500v11" /><path d="M5 5v10l9-5z" fill="#4a90ff" /></ToolIcon>
    </button>
    <button aria-label="Net trace" className={`${toolButton} ml-[2px] bg-[#b5cffa]`}>
      <ToolIcon width={1.2}>
        <rect x=".8" y=".8" width="18.400" height="18.400" rx="2" />
        <g strokeWidth="1.500">
          <circle cx="5.500" cy="5" r="1.700" stroke="#10b032" />
          <path d="M7 6.500l11 11" stroke="#10b032" />
          <circle cx="11.500" cy="4" r="1.500" stroke="#3d9bff" />
          <path d="M13 5l2 4 3.500 3" stroke="#3d9bff" />
          <circle cx="3.500" cy="11.500" r="1.300" stroke="#f20d0d" />
          <path d="M5 13l3 1 2 4" stroke="#f20d0d" />
        </g>
      </ToolIcon>
    </button>
    <button aria-label="Curve" className={`${toolButton} ml-[2px]`}>
      <ToolIcon stroke="#222" width={1.6}><circle cx="3.500" cy="16.500" r="2" /><circle cx="16.500" cy="4" r="2" /><path d="M4 14.500Q5 5 14.500 4" /></ToolIcon>
    </button>
    <span className="ml-[3px]"><Divider /></span>
    <button aria-label="Mouse" className={`${toolButton} ml-1`}>
      <ToolIcon><rect x="4.200" y="2" width="11.600" height="16.500" rx="5" /><path d="M4.500 9h11M10 2v2.500" /><rect x="8.700" y="4.500" width="2.600" height="4" rx="1" /></ToolIcon>
    </button>
    <span className="ml-[2px]"><Divider /></span>
    <button className="ml-[5px] h-[22px] w-[109px] border border-[#f20d0d] text-center text-[14px] leading-5">[ColorScheme]</button>
    <span className="ml-[3px]"><Divider /></span>
    <button aria-label="Visibility" className={`${toolButton} ml-[4px]`}>
      <ToolIcon stroke="#4a86e0" width={1.3}><path d="M1 10q4-6.500 9-6.500t9 6.500q-4 6.500-9 6.500T1 10z" /><circle cx="10" cy="10" r="4.200" /><circle cx="10" cy="10" r="1.700" /></ToolIcon>
    </button>
    <button aria-label="Toggle panel" className="ml-auto">
      <svg viewBox="0 0 22 18" className="h-[18px] w-[22px]" fill="none" stroke="#6b6b6b" strokeWidth="1.600">
        <path d="M1 1h20v16H1zM7 1v16M10.500 5.500h7M10.500 9h7M10.500 12.500h7" />
      </svg>
    </button>
  </div>
);

const Workspace: React.FC = () => (
  <main className="flex min-w-0 flex-1 flex-col border-l border-[#dcdcdc]">
    <div className="flex h-[34px] shrink-0 items-center border-b border-[#dcdcdc] bg-[#fafafa] pr-[11px] pl-2">
      <button className="flex h-6 w-[139px] items-center justify-center gap-1 rounded-[3px] border border-[#6e6e6e] text-[14px] whitespace-nowrap text-[#7f7f7f]">
        <svg viewBox="0 0 18 18" className="h-[18px] w-[18px]" fill="none" stroke="#111" strokeWidth="1.600"><path d="M0 9.500L9 1l9 8.500M3 8v9h12V8M7 17v-5.500h4V17" /></svg>
        Member Center
      </button>
      <button className="ml-[5px] h-6 w-[218px] rounded-[3px] border border-black bg-white text-center text-[15px] leading-[22px] font-bold text-black">
        Enjoy 20-HN1WKGMA.pcb
      </button>
      <button aria-label="Close all" className="ml-auto">
        <svg viewBox="0 0 18 18" className="h-[18px] w-[18px]"><path d="M1 15V1h14" fill="none" stroke="#7b7b7b" strokeWidth="2" /><rect x="4" y="4" width="14" height="14" rx="2" fill="#7b7b7b" /><path d="M8 8l6 6M14 8l-6 6" stroke="#fff" strokeWidth="1.500" /></svg>
      </button>
    </div>
    <div className="flex min-h-0 flex-1">
      <div className="flex min-w-0 flex-1 flex-col border-r border-[#dcdcdc]">
        <Toolbar />
        <div className="min-h-0 flex-1 overflow-hidden bg-white">
          <Board />
        </div>
      </div>
      <button aria-label="Open panel" className="flex w-[9px] shrink-0 items-center bg-[#fafafa] pt-8">
        <svg viewBox="0 0 9 112" className="h-[112px] w-[9px]"><path d="M9 1L0 14v84l9 13z" fill="#d6e9ff" stroke="#a6d0f7" /><path d="M6 52.500L2.500 56 6 59.500" fill="none" stroke="#4a9be8" strokeWidth="1.300" /></svg>
      </button>
    </div>
  </main>
);

const App: React.FC = () => (
  <div className="flex h-screen flex-col overflow-hidden bg-white font-['Noto_Sans','Noto_Sans_CJK_SC',sans-serif]">
    <TitleBar />
    <nav className="flex h-8 shrink-0 items-center gap-4 border-b border-[#dcdcdc] bg-[#f0f0f0] pl-[18px] text-[14px] text-black">
      {menus.map((menu) => (
        <button key={menu} className="whitespace-nowrap">{menu}</button>
      ))}
    </nav>
    <div className="flex min-h-0 flex-1">
      <SidePanel />
      <button aria-label="Collapse panel" className="flex w-[9px] shrink-0 items-center bg-[#f8fdf8] pt-[18px]">
        <svg viewBox="0 0 9 112" className="h-[112px] w-[9px]"><path d="M0 1l9 13v84l-9 13z" fill="#d6e9ff" stroke="#a6d0f7" /><path d="M6 50.500L2.500 54 6 57.500" fill="none" stroke="#4a9be8" strokeWidth="1.300" /></svg>
      </button>
      <Workspace />
    </div>
    <footer className="h-5 shrink-0 bg-[#0590df] text-center font-['Liberation_Mono',monospace] text-[15px] leading-5 text-white">
      XZZ Schematics https://www.xzz.hk
    </footer>
  </div>
);

export default App;
